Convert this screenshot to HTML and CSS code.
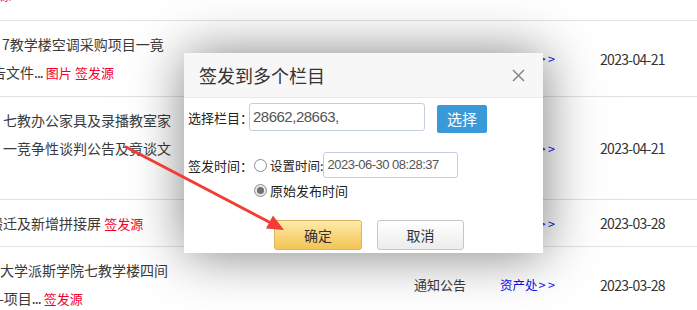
FILE: index.html
```html
<!DOCTYPE html>
<html lang="zh-CN">
<head>
<meta charset="utf-8">
<title>签发到多个栏目</title>
<link rel="stylesheet" href="styles.css">
</head>
<body>
<div class="list">
  <div class="row h75">
    <div class="c-title">
      <div class="ln">某某大学派斯学院公开招标采购项目</div>
      <div class="ln ind-0"><span class="red">签发源</span></div>
    </div>
    <div class="c-type">通知公告</div>
    <div class="c-dept"><a class="blue">资产处<span class="gt">&gt;&gt;</span></a></div>
    <div class="c-date">2023-04-21</div>
  </div>
  <div class="row h75">
    <div class="c-title">
      <div class="ln ind-a">7教学楼空调采购项目一竟</div>
      <div class="ln ind-b">告文件<span class="dots">...</span> <span class="red">图片</span> <span class="red">签发源</span></div>
    </div>
    <div class="c-type">通知公告</div>
    <div class="c-dept"><a class="blue">资产处<span class="gt">&gt;&gt;</span></a></div>
    <div class="c-date">2023-04-21</div>
  </div>
  <div class="row h103">
    <div class="c-title">
      <div class="ln ind-c">七教办公家具及录播教室家</div>
      <div class="ln ind-c">一竞争性谈判公告及竟谈文</div>
    </div>
    <div class="c-type">通知公告</div>
    <div class="c-dept"><a class="blue">资产处<span class="gt">&gt;&gt;</span></a></div>
    <div class="c-date">2023-04-21</div>
  </div>
  <div class="row h47">
    <div class="c-title">
      <div class="ln ind-d">搬迁及新增拼接屏 <span class="red">签发源</span></div>
    </div>
    <div class="c-type">通知公告</div>
    <div class="c-dept"><a class="blue">资产处<span class="gt">&gt;&gt;</span></a></div>
    <div class="c-date">2023-03-28</div>
  </div>
  <div class="row h75">
    <div class="c-title">
      <div class="ln ind-e">大学派斯学院七教学楼四间</div>
      <div class="ln ind-f">-项目<span class="dots">...</span> <span class="red">签发源</span></div>
    </div>
    <div class="c-type">通知公告</div>
    <div class="c-dept"><a class="blue">资产处<span class="gt">&gt;&gt;</span></a></div>
    <div class="c-date">2023-03-28</div>
  </div>
</div>

<div class="layer">
  <div class="layer-title">
    <span>签发到多个栏目</span>
    <svg class="close" width="13" height="13" viewBox="0 0 13 13"><path d="M1 1L12 12M12 1L1 12" stroke="#8a8a8a" stroke-width="1.6" fill="none"/></svg>
  </div>
  <div class="layer-body">
    <div class="f-row r1">
      <span class="f-label">选择栏目：</span>
      <div class="inp">28662,28663,</div>
      <span class="btn-blue">选择</span>
    </div>
    <div class="f-row r2">
      <span class="f-label">签发时间：</span>
      <span class="radio"></span>
      <span class="r-text set">设置时间:</span>
      <div class="inp date">2023-06-30 08:28:37</div>
    </div>
    <div class="f-row r3">
      <span class="radio on"></span>
      <span class="r-text">原始发布时间</span>
    </div>
    <div class="f-row btns">
      <span class="btn ok">确定</span>
      <span class="btn cancel">取消</span>
    </div>
  </div>
</div>

<svg class="arrow" width="697" height="310" viewBox="0 0 697 310">
  <line x1="126" y1="147" x2="271" y2="223" stroke="#f23c36" stroke-width="3" stroke-linecap="round"/>
  <polygon points="284,230 266,228.5 273,215.5" fill="#f23c36"/>
</svg>
</body>
</html>
```

FILE: styles.css
```css
html, body {
  margin: 0;
  padding: 0;
}
body {
  width: 697px;
  height: 310px;
  overflow: hidden;
  position: relative;
  background: #fff;
  font-family: "Noto Sans CJK SC", sans-serif;
  font-size: 14px;
  color: #3a3a3a;
}
.list {
  margin-top: -57px;
}
.row {
  display: grid;
  grid-template-columns: 400px 100px 100px 97px;
  align-items: center;
  border-bottom: 1px solid #dde2e8;
  box-sizing: border-box;
  overflow: hidden;
}
.row:first-child { height: 78px; }
.h75 { height: 76px; }
.h103 { height: 103px; }
.h47 { height: 47px; }
.c-title {
  align-self: start;
  padding-top: 9px;
  white-space: nowrap;
  overflow: hidden;
}
.ln {
  line-height: 28px;
  height: 28px;
}
.ind-0 { text-indent: -28px; }
.ind-a { text-indent: 2px; }
.ind-b { text-indent: -8px; }
.ind-c { text-indent: 3px; }
.ind-d { text-indent: -11px; }
.ind-e { text-indent: 0; }
.ind-f { text-indent: -1px; }
.dots { letter-spacing: -1px; }
.red {
  color: #f5002a;
  font-size: 13px;
}
.blue {
  color: #1010f0;
}
.gt {
  letter-spacing: 2.5px;
  margin-left: 1px;
}
.c-type {
  padding-left: 14px;
  font-size: 13px;
}
.c-dept {
  font-size: 12.5px;
}
.c-date {
  font-size: 14px;
  letter-spacing: -0.7px;
  color: #333;
}

.layer {
  position: absolute;
  left: 184px;
  top: 53px;
  width: 359px;
  height: 200px;
  background: #fff;
  box-shadow: 1px 1px 50px rgba(0, 0, 0, 0.5);
}
.layer-title {
  height: 44px;
  background: #f7f7f7;
  border-bottom: 1px solid #e9e9e9;
  padding-left: 15px;
  padding-right: 18px;
  display: flex;
  align-items: center;
  justify-content: space-between;
  font-size: 18px;
  color: #333;
}
.close { display: block; }
.layer-body {
  padding: 5px 0 0 4px;
}
.f-row {
  display: flex;
  align-items: center;
}
.r1 {
  height: 28px;
}
.f-label {
  width: 61px;
  font-size: 13px;
  color: #222;
  white-space: nowrap;
}
.inp {
  width: 176px;
  height: 28px;
  box-sizing: border-box;
  border: 1px solid #c5cde2;
  border-radius: 3px;
  padding-left: 3px;
  font-family: "Liberation Sans", sans-serif;
  font-size: 15px;
  letter-spacing: -0.5px;
  line-height: 26px;
  color: #555;
}
.btn-blue {
  margin-left: 12px;
  margin-top: 4px;
  width: 50px;
  height: 28px;
  line-height: 28px;
  text-align: center;
  background: #3a9ad9;
  color: #fff;
  font-size: 15px;
  border-radius: 2px;
}
.r2 {
  margin-top: 21px;
}
.radio {
  width: 13px;
  height: 13px;
  box-sizing: border-box;
  border: 1px solid #8d8d8d;
  border-radius: 50%;
  background: #fff;
  margin-left: 5px;
  margin-right: 3px;
  display: flex;
  align-items: center;
  justify-content: center;
  flex: none;
}
.radio.on {
  background: #e8e8e8;
}
.radio.on::after {
  content: "";
  width: 7px;
  height: 7px;
  border-radius: 50%;
  background: #707070;
}
.r-text {
  font-size: 13px;
  color: #222;
  white-space: nowrap;
}
.r-text.set {
  font-size: 12.5px;
}
.inp.date {
  width: 135px;
  height: 26px;
  line-height: 24px;
  margin-left: 0;
  font-size: 13px;
  letter-spacing: -0.5px;
  padding-left: 3px;
}
.r3 {
  margin-top: 2px;
  height: 20px;
  padding-left: 61px;
}
.btns {
  margin-top: 20px;
  padding-left: 86px;
  gap: 15px;
}
.btn {
  width: 88px;
  height: 30px;
  box-sizing: border-box;
  border-radius: 3px;
  text-align: center;
  line-height: 28px;
  font-size: 14px;
  color: #333;
}
.ok {
  background: linear-gradient(#fdeaaa, #f4c455);
  border: 1px solid #dcb35e;
}
.cancel {
  width: 87px;
  background: linear-gradient(#ffffff, #ececec);
  border: 1px solid #c6c6c6;
}

.arrow {
  position: absolute;
  left: 0;
  top: 0;
  pointer-events: none;
}
```
